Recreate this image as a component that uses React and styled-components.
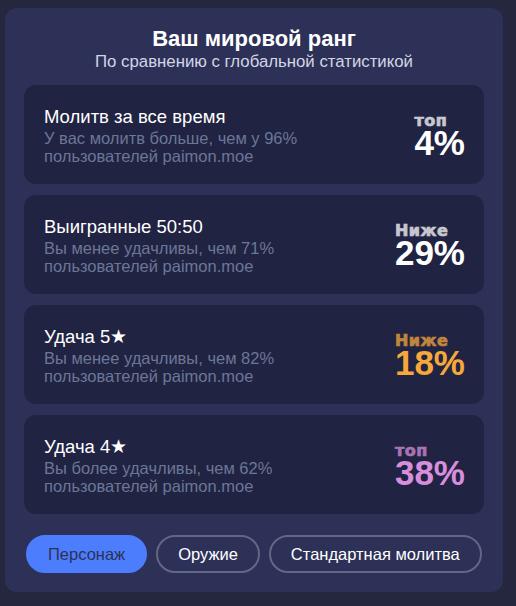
import React from "react";
import styled, { createGlobalStyle } from "styled-components";

const Global = createGlobalStyle`
  html, body { margin: 0; padding: 0; background: #25273f; }
  body { font-family: "Liberation Sans", Arial, sans-serif; }
`;

const Page = styled.div`
  width: 516px;
  height: 606px;
  padding: 8px 0 0 5px;
  box-sizing: border-box;
  background: #25273f;
`;

const Card = styled.div`
  width: 498px;
  height: 584px;
  box-sizing: border-box;
  background: #2d3157;
  border-radius: 12px;
  padding: 18px 19px 19px 19px;
  display: flex;
  flex-direction: column;
`;

const Header = styled.div`
  display: flex;
  flex-direction: column;
  align-items: center;
  margin-bottom: 13px;
`;

const Title = styled.h1`
  margin: 0;
  font-size: 22px;
  line-height: 26px;
  font-weight: 700;
  color: #ffffff;
`;

const Subtitle = styled.div`
  font-size: 16.8px;
  line-height: 20px;
  color: #d3d6e4;
`;

const List = styled.div`
  display: flex;
  flex-direction: column;
  gap: 11px;
`;

const Row = styled.div`
  height: 99px;
  box-sizing: border-box;
  background: #212342;
  border-radius: 12px;
  padding: 0 19px 0 20px;
  display: flex;
  align-items: center;
  justify-content: space-between;
`;

const Info = styled.div`
  display: flex;
  flex-direction: column;
`;

const RowTitle = styled.div`
  font-size: 18.5px;
  line-height: 25px;
  color: #ffffff;
`;

const Desc = styled.div`
  font-size: 16.5px;
  line-height: 18px;
  color: #6b7797;
  width: 300px;
`;

const Rank = styled.div`
  display: flex;
  flex-direction: column;
  align-items: flex-start;
  color: ${(p) => p.$color};
  margin-top: 4px;
`;

const RankLabel = styled.div`
  font-family: "DejaVu Sans", sans-serif;
  font-size: 16px;
  line-height: 13px;
  font-weight: 700;
  letter-spacing: 0.5px;
  opacity: 0.75;
  -webkit-text-stroke: 0.7px currentColor;
`;

const RankValue = styled.div`
  font-family: "Liberation Sans", Arial, sans-serif;
  font-size: 35px;
  line-height: 32px;
  font-weight: 700;
`;

const Tabs = styled.div`
  display: flex;
  gap: 9px;
  margin-top: 21px;
  padding-left: 2px;
`;

const Tab = styled.button`
  height: 38px;
  box-sizing: border-box;
  border-radius: 19px;
  padding: 0 20px;
  font-family: "Liberation Sans", Arial, sans-serif;
  font-size: 16.5px;
  cursor: pointer;
  background: ${(p) => (p.$active ? "#4b7dfd" : "transparent")};
  color: ${(p) => (p.$active ? "#2d3157" : "#ffffff")};
  border: 2px solid ${(p) => (p.$active ? "#4b7dfd" : "#626785")};
`;

const rows = [
  {
    title: "Молитв за все время",
    desc: "У вас молитв больше, чем у 96% пользователей paimon.moe",
    label: "топ",
    value: "4%",
    color: "#ffffff",
  },
  {
    title: "Выигранные 50:50",
    desc: "Вы менее удачливы, чем 71% пользователей paimon.moe",
    label: "Ниже",
    value: "29%",
    color: "#ffffff",
  },
  {
    title: "Удача 5★",
    desc: "Вы менее удачливы, чем 82% пользователей paimon.moe",
    label: "Ниже",
    value: "18%",
    color: "#f6a83b",
  },
  {
    title: "Удача 4★",
    desc: "Вы более удачливы, чем 62% пользователей paimon.moe",
    label: "топ",
    value: "38%",
    color: "#d78fdc",
  },
];

export default function App() {
  return (
    <>
      <Global />
      <Page>
        <Card>
          <Header>
            <Title>Ваш мировой ранг</Title>
            <Subtitle>По сравнению с глобальной статистикой</Subtitle>
          </Header>
          <List>
            {rows.map((r) => (
              <Row key={r.title}>
                <Info>
                  <RowTitle>{r.title}</RowTitle>
                  <Desc>{r.desc}</Desc>
                </Info>
                <Rank $color={r.color}>
                  <RankLabel>{r.label}</RankLabel>
                  <RankValue>{r.value}</RankValue>
                </Rank>
              </Row>
            ))}
          </List>
          <Tabs>
            <Tab $active>Персонаж</Tab>
            <Tab>Оружие</Tab>
            <Tab>Стандартная молитва</Tab>
          </Tabs>
        </Card>
      </Page>
    </>
  );
}
